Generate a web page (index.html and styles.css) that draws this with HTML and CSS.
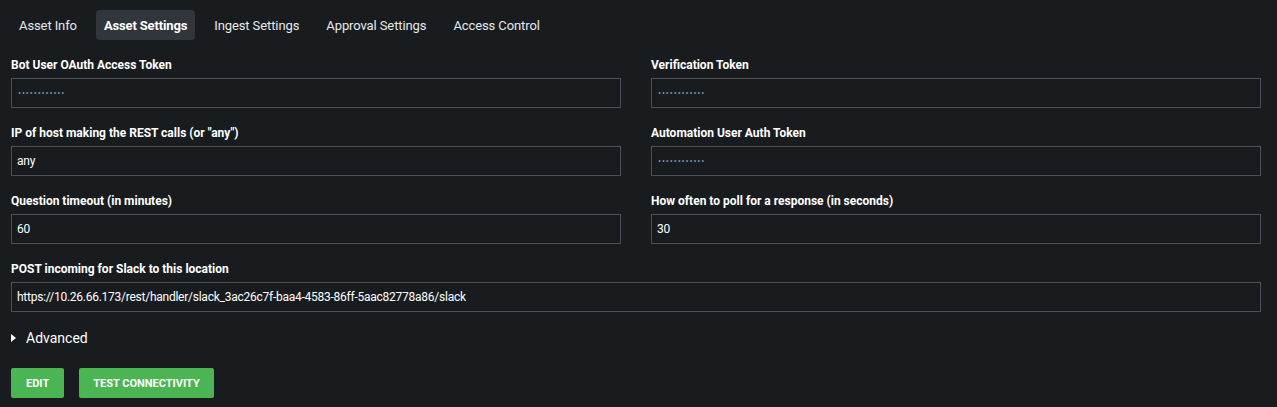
FILE: index.html
```html
<!DOCTYPE html>
<html>
<head>
<meta charset="utf-8">
<link rel="stylesheet" href="styles.css">
</head>
<body>
<div class="page">
  <nav class="tabs">
    <span class="tab">Asset Info</span>
    <span class="tab active">Asset Settings</span>
    <span class="tab">Ingest Settings</span>
    <span class="tab">Approval Settings</span>
    <span class="tab">Access Control</span>
  </nav>
  <div class="grid">
    <div class="field">
      <label class="label">Bot User OAuth Access Token</label>
      <div class="input pw">••••••••••••</div>
    </div>
    <div class="field">
      <label class="label">Verification Token</label>
      <div class="input pw">••••••••••••</div>
    </div>
    <div class="field">
      <label class="label">IP of host making the REST calls (or "any")</label>
      <div class="input">any</div>
    </div>
    <div class="field">
      <label class="label">Automation User Auth Token</label>
      <div class="input pw">••••••••••••</div>
    </div>
    <div class="field">
      <label class="label">Question timeout (in minutes)</label>
      <div class="input">60</div>
    </div>
    <div class="field">
      <label class="label">How often to poll for a response (in seconds)</label>
      <div class="input">30</div>
    </div>
    <div class="field wide">
      <label class="label">POST incoming for Slack to this location</label>
      <div class="input">https://10.26.66.173/rest/handler/slack_3ac26c7f-baa4-4583-86ff-5aac82778a86/slack</div>
    </div>
  </div>
  <div class="advanced">
    <svg class="caret" width="5" height="8" viewBox="0 0 5 8"><path d="M0 0 L5 4 L0 8 Z" fill="#ffffff"/></svg>
    <span>Advanced</span>
  </div>
  <div class="buttons">
    <button class="btn">EDIT</button>
    <button class="btn">TEST CONNECTIVITY</button>
  </div>
</div>
</body>
</html>
```
FILE: styles.css
```css
html, body {
  margin: 0;
  padding: 0;
  background: #191c1f;
}
body {
  font-family: Roboto, "Liberation Sans", sans-serif;
  color: #ffffff;
}
.page {
  padding: 10px 16px 0 11px;
  width: 1250px;
}
.tabs {
  display: flex;
  gap: 11px;
  height: 30px;
}
.tab {
  display: flex;
  align-items: center;
  padding: 0 8px;
  font-size: 13px;
  letter-spacing: -0.1px;
  color: #e6e8ea;
  border-radius: 4px;
  padding-top: 1px;
}
.tab.active {
  background: #30363b;
  font-weight: 700;
  letter-spacing: -0.15px;
  color: #ffffff;
}
.grid {
  display: grid;
  grid-template-columns: 610px 610px;
  column-gap: 30px;
  row-gap: 0;
  margin-top: 16px;
}
.field {
  display: flex;
  flex-direction: column;
  height: 68px;
}
.field.wide {
  grid-column: 1 / 3;
}
.label {
  font-size: 12px;
  font-weight: 700;
  height: 21px;
  padding-top: 1px;
  line-height: 16px;
}
.input {
  box-sizing: border-box;
  height: 30px;
  border: 1px solid #4a5158;
  padding: 0 5px;
  display: flex;
  align-items: center;
  font-size: 12px;
  letter-spacing: -0.25px;
  color: #ffffff;
}
.input.pw {
  color: #7e93a6;
  font-size: 9px;
  letter-spacing: 0.9px;
  padding-left: 6px;
}
.advanced {
  display: flex;
  align-items: center;
  gap: 10px;
  margin-top: 0;
  height: 20px;
  font-size: 14px;
}
.caret {
  display: block;
}
.buttons {
  display: flex;
  gap: 15px;
  margin-top: 20px;
}
.btn {
  height: 30px;
  border: none;
  border-radius: 2px;
  background: #4cb553;
  color: #ffffff;
  font-family: Roboto, "Liberation Sans", sans-serif;
  font-weight: 700;
  font-size: 11px;
  padding: 0 15px;
}
.btn + .btn {
  padding: 0 14px;
}
```
